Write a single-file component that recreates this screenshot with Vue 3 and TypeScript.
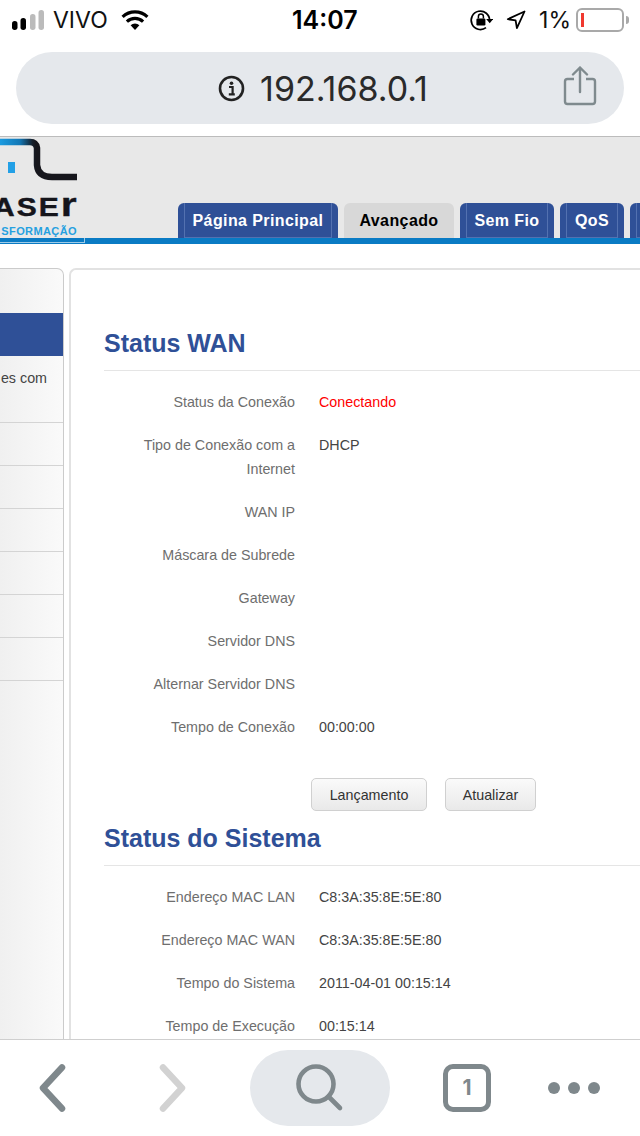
<script setup lang="ts">
interface Row { label: string; value?: string; alert?: boolean; tall?: boolean }
const wan: Row[] = [
  { label: 'Status da Conexão', value: 'Conectando', alert: true },
  { label: 'Tipo de Conexão com a Internet', value: 'DHCP', tall: true },
  { label: 'WAN IP' },
  { label: 'Máscara de Subrede' },
  { label: 'Gateway' },
  { label: 'Servidor DNS' },
  { label: 'Alternar Servidor DNS' },
  { label: 'Tempo de Conexão', value: '00:00:00' },
]
const system: Row[] = [
  { label: 'Endereço MAC LAN', value: 'C8:3A:35:8E:5E:80' },
  { label: 'Endereço MAC WAN', value: 'C8:3A:35:8E:5E:80' },
  { label: 'Tempo do Sistema', value: '2011-04-01 00:15:14' },
  { label: 'Tempo de Execução', value: '00:15:14' },
]
const tabs = [
  { name: 'Página Principal', width: 160 },
  { name: 'Avançado', width: 110, active: true },
  { name: 'Sem Fio', width: 94 },
  { name: 'QoS', width: 64 },
  { name: '', width: 40 },
]
</script>

<template>
  <div class="screen">
    <header class="status">
      <div class="status-left">
        <svg class="signal" width="36" height="20" viewBox="0 0 36 20">
          <rect x="0" y="11" width="5.500" height="9" rx="2.700" fill="#000" />
          <rect x="8.500" y="8" width="5.500" height="12" rx="2.700" fill="#000" />
          <rect x="18" y="4" width="5.500" height="16" rx="2.700" fill="#bbb" />
          <rect x="26.500" y="0" width="5.500" height="20" rx="2.700" fill="#bbb" />
        </svg>
        <span class="carrier">VIVO</span>
        <svg class="wifi" width="28" height="20" viewBox="0 0 28 20">
          <path d="M14 20 9.600 15.200a6.400 6.400 0 0 1 8.800 0Z" fill="#000" />
          <path d="M5.900 11.600a11.800 11.800 0 0 1 16.200 0" fill="none" stroke="#000" stroke-width="3.200" />
          <path d="M1.600 6.800a18 18 0 0 1 24.800 0" fill="none" stroke="#000" stroke-width="3.200" />
        </svg>
      </div>
      <span class="clock">14:07</span>
      <div class="status-right">
        <svg width="24" height="24" viewBox="0 0 24 24">
          <path d="M20.600 12.500A9.200 9.200 0 1 0 17 19.600" fill="none" stroke="#000" stroke-width="1.700" />
          <path d="M17.200 11h7l-3.500 4.200Z" fill="#000" />
          <rect x="7.400" y="10.500" width="9" height="7" rx="1.200" fill="#000" />
          <path d="M9.400 10.500V8.500a2.500 2.500 0 0 1 5 0v2" fill="none" stroke="#000" stroke-width="1.500" />
        </svg>
        <svg class="arrow" width="20" height="20" viewBox="0 0 20 20">
          <path d="M18.500 1.500 1.800 9.200l7.800 1.200 1.300 7.800Z" fill="none" stroke="#000" stroke-width="1.800" stroke-linejoin="round" />
        </svg>
        <span class="percent">1%</span>
        <div class="battery"><i class="charge"></i></div>
        <i class="nub"></i>
      </div>
    </header>

    <div class="address-wrap">
      <div class="address">
        <div class="url">
          <svg width="27" height="27" viewBox="0 0 27 27">
            <circle cx="13.500" cy="13.500" r="11.500" fill="none" stroke="#222" stroke-width="2.600" />
            <circle cx="13.500" cy="8.300" r="1.800" fill="#222" />
            <path d="M11 12h3.600v7M10.800 19.300h6" fill="none" stroke="#222" stroke-width="2.200" />
          </svg>
          <span>192.168.0.1</span>
        </div>
        <svg class="share" width="34" height="40" viewBox="0 0 34 40">
          <path d="M11 13H4.500A2.500 2.500 0 0 0 2 15.500v20A2.500 2.500 0 0 0 4.500 38h25a2.500 2.500 0 0 0 2.500-2.500v-20a2.500 2.500 0 0 0-2.500-2.500H23" fill="none" stroke="#7f8a8e" stroke-width="2.400" />
          <path d="M17 26V1.500M10 8.500 17 1.500l7 7" fill="none" stroke="#7f8a8e" stroke-width="2.400" stroke-linecap="round" stroke-linejoin="round" />
        </svg>
      </div>
    </div>

    <main class="page">
      <section class="banner">
        <div class="logo">
          <svg class="logo-mark" width="78" height="48" viewBox="0 0 78 48">
            <defs>
              <linearGradient id="roof" gradientUnits="userSpaceOnUse" x1="0" x2="36" y1="0" y2="0">
                <stop offset="0" stop-color="#1b9be0" />
                <stop offset="0.55" stop-color="#1277b5" />
                <stop offset="0.9" stop-color="#16202c" />
                <stop offset="1" stop-color="#16161c" />
              </linearGradient>
            </defs>
            <path d="M0 5H30Q36 5 37 11L37 28Q38 40 52 40H77" fill="none" stroke="url(#roof)" stroke-width="6.500" />
            <rect x="8" y="25" width="7" height="11" fill="#23a0e6" />
          </svg>
          <span class="logo-name">ASE<b>r</b></span>
          <span class="logo-sub">SFORMAÇÃO</span>
        </div>
        <nav class="tabs">
          <div
            v-for="tab in tabs"
            :key="tab.width"
            class="tab"
            :class="{ active: tab.active }"
            :style="{ width: tab.width + 'px' }"
          >{{ tab.name }}</div>
        </nav>
      </section>
      <div class="strip"><i class="strip-mark"></i></div>

      <div class="body">
        <aside class="side">
          <div class="side-top"></div>
          <div class="side-current"></div>
          <div class="side-item tall">es com</div>
          <div v-for="n in 6" :key="n" class="side-item"></div>
        </aside>

        <article class="panel">
          <h2 class="first">Status WAN</h2>
          <div class="rows">
            <div v-for="row in wan" :key="row.label" class="row" :class="{ tall: row.tall }">
              <div class="label">{{ row.label }}</div>
              <div class="value" :class="{ alert: row.alert }">{{ row.value }}</div>
            </div>
          </div>
          <div class="actions">
            <button class="lanc" type="button">Lançamento</button>
            <button class="atual" type="button">Atualizar</button>
          </div>
          <h2>Status do Sistema</h2>
          <div class="rows">
            <div v-for="row in system" :key="row.label" class="row">
              <div class="label">{{ row.label }}</div>
              <div class="value">{{ row.value }}</div>
            </div>
          </div>
        </article>
      </div>
    </main>

    <footer class="toolbar">
      <svg class="back" width="28" height="48" viewBox="0 0 28 48">
        <path d="M24 3.500 5 24l19 20.500" fill="none" stroke="#7f888c" stroke-width="6.500" stroke-linecap="round" stroke-linejoin="round" />
      </svg>
      <svg class="forward" width="28" height="48" viewBox="0 0 28 48">
        <path d="M5 3.500 24 24 5 44.500" fill="none" stroke="#d2d2d2" stroke-width="6.500" stroke-linecap="round" stroke-linejoin="round" />
      </svg>
      <div class="search">
        <svg width="50" height="50" viewBox="0 0 50 50">
          <circle cx="21" cy="21" r="17.500" fill="none" stroke="#7f888c" stroke-width="4.600" />
          <path d="M33.500 33.500 45 45" fill="none" stroke="#7f888c" stroke-width="4.600" stroke-linecap="round" />
        </svg>
      </div>
      <div class="count">1</div>
      <div class="more"><i></i><i></i><i></i></div>
    </footer>
  </div>
</template>

<style scoped>
.screen {
  width: 640px;
  height: 1136px;
  display: flex;
  flex-direction: column;
  overflow: hidden;
  background: #fff;
  font-family: "Liberation Sans", Arial, sans-serif;
  color: #000;
}
.status {
  height: 40px;
  flex: none;
  display: grid;
  grid-template-columns: 280px auto 1fr;
  align-items: center;
  padding: 0 11px 0 12px;
  font-family: Inter, "Liberation Sans", sans-serif;
}
.status-left, .status-right { display: flex; align-items: center; }
.status-right { justify-content: flex-end; }
.signal { margin-right: 5px; }
.carrier { font-size: 23px; color: #111; }
.wifi { margin-left: 13px; }
.clock { font-size: 25px; font-weight: 600; }
.arrow { margin-left: 13px; }
.percent { font-size: 23px; margin-left: 13px; color: #111; }
.battery {
  width: 48px;
  height: 24px;
  margin-left: 5px;
  border: 2px solid #a9a9a9;
  border-radius: 6px;
  padding: 3px;
  box-sizing: border-box;
}
.charge { display: block; width: 3px; height: 100%; background: #f0392f; }
.nub { width: 3px; height: 8px; margin-left: 2px; border-radius: 0 3px 3px 0; background: #a9a9a9; }
.address-wrap { flex: none; height: 96px; padding: 12px 16px 0; box-sizing: border-box; }
.address {
  height: 72px;
  box-sizing: border-box;
  padding-left: 6px;
  border-radius: 36px;
  background: #e5e8ec;
  position: relative;
  display: flex;
  align-items: center;
  justify-content: center;
}
.url { display: flex; align-items: center; gap: 15px; font-family: Inter, "Liberation Sans", sans-serif; font-size: 34px; color: #2a2a2a; }
.share { position: absolute; right: 27px; top: 14px; }
.page { flex: 1; min-height: 0; overflow: hidden; border-top: 1px solid #bcbcbc; }
.banner {
  height: 101px;
  background: #e8e8e8;
  position: relative;
  overflow: hidden;
}
.logo { position: absolute; left: 0; top: 0; width: 85px; height: 101px; }
.logo-mark { position: absolute; left: 0; top: 0; }
.logo-name {
  position: absolute;
  right: 8px;
  top: 51px;
  font-size: 25px;
  line-height: 32px;
  font-weight: 700;
  color: #15151b;
  letter-spacing: 1.700px;
  white-space: nowrap;
  -webkit-text-stroke: 0.400px #15151b;
  transform: scaleX(1.2);
  transform-origin: right;
}
.logo-name b { font-size: 34px; letter-spacing: 0; }
.logo-sub {
  position: absolute;
  right: 8px;
  top: 88px;
  font-size: 11px;
  line-height: 12px;
  font-weight: 700;
  color: #25a0e0;
  white-space: nowrap;
  letter-spacing: 0.400px;
}
.tabs {
  position: absolute;
  left: 178px;
  bottom: 0;
  display: flex;
  gap: 6px;
}
.tab {
  flex: none;
  height: 35px;
  box-sizing: border-box;
  position: relative;
  border-radius: 6px 6px 0 0;
  background: #2f5097;
  color: #fff;
  font-size: 16px;
  font-weight: 700;
  line-height: 35px;
  text-align: center;
  white-space: nowrap;
  letter-spacing: 0.400px;
}
.tab::after {
  content: "";
  position: absolute;
  inset: 0 6px 0 6px;
  border: 1px solid #5371b0;
  border-top: 0;
}
.tab.active {
  background: #d8d8d8;
  color: #000;
}
.tab.active::after { display: none; }
.strip { height: 6px; background: #0a7bc4; position: relative; }
.strip-mark {
  position: absolute;
  left: 0;
  top: 0;
  width: 85px;
  height: 5px;
  box-sizing: border-box;
  border-right: 1px solid #9fcbe6;
  border-bottom: 1px solid #9fcbe6;
}
.body { display: flex; align-items: flex-start; gap: 5px; padding-top: 24px; }
.side {
  width: 64px;
  height: 900px;
  flex: none;
  box-sizing: border-box;
  border: 1px solid #cbcbcb;
  border-left: 0;
  border-radius: 0 7px 0 0;
  background: linear-gradient(to right, #f0f0f0, #fafafa);
  overflow: hidden;
}
.side-top { height: 44px; }
.side-current { height: 43px; background: #2f5097; }
.side-item {
  height: 43px;
  box-sizing: border-box;
  border-bottom: 1px solid #d4d4d4;
  font-size: 14.300px;
  color: #444;
  text-align: right;
  padding-right: 16px;
  line-height: 44px;
}
.side-item.tall { height: 67px; }
.panel {
  flex: 1;
  height: 900px;
  box-sizing: border-box;
  border: 2px solid #e2e2e2;
  border-right: 0;
  border-radius: 7px 0 0 0;
  padding: 0 0 0 33px;
  overflow: hidden;
}
h2 {
  margin: 0;
  height: 43px;
  box-sizing: border-box;
  border-bottom: 1px solid #e5e5e5;
  color: #2f5097;
  font-size: 25px;
  font-weight: 700;
  line-height: 30px;
}
h2.first { margin-top: 58px; }
.rows { display: flex; flex-direction: column; gap: 19px; padding-top: 19px; }
.row { display: flex; gap: 24px; font-size: 14.300px; line-height: 24px; min-height: 24px; }
.label { width: 191px; flex: none; text-align: right; color: #6e6e6e; }
.value { color: #444; }
.alert { color: #f00; }
.actions { display: flex; gap: 18px; padding: 39px 0 0 207px; margin-bottom: 12px; }
button {
  height: 33px;
  box-sizing: border-box;
  border: 1px solid #d0d0d0;
  border-radius: 5px;
  background: linear-gradient(#fafafa, #e9e9e9);
  color: #333;
  font-family: inherit;
  font-size: 14.300px;
  padding: 0;
}
.lanc { width: 116px; }
.atual { width: 91px; }
.toolbar {
  flex: none;
  height: 97px;
  box-sizing: border-box;
  border-top: 1px solid #cfcfcf;
  background: #fff;
  position: relative;
  display: flex;
  align-items: center;
  padding-left: 38px;
}
.forward { margin-left: 92px; }
.search {
  width: 140px;
  height: 76px;
  margin-left: 64px;
  border-radius: 38px;
  background: #e5e8ec;
  display: flex;
  align-items: center;
  justify-content: center;
}
.count {
  width: 48px;
  height: 48px;
  margin-left: 53px;
  box-sizing: border-box;
  border: 5px solid #7f888c;
  border-radius: 10px;
  color: #7f888c;
  font-family: Inter, "Liberation Sans", sans-serif;
  font-size: 21px;
  font-weight: 700;
  line-height: 38px;
  text-align: center;
}
.more { display: flex; gap: 8px; margin-left: 57px; }
.more i { width: 12px; height: 12px; border-radius: 50%; background: #7f888c; }
</style>
